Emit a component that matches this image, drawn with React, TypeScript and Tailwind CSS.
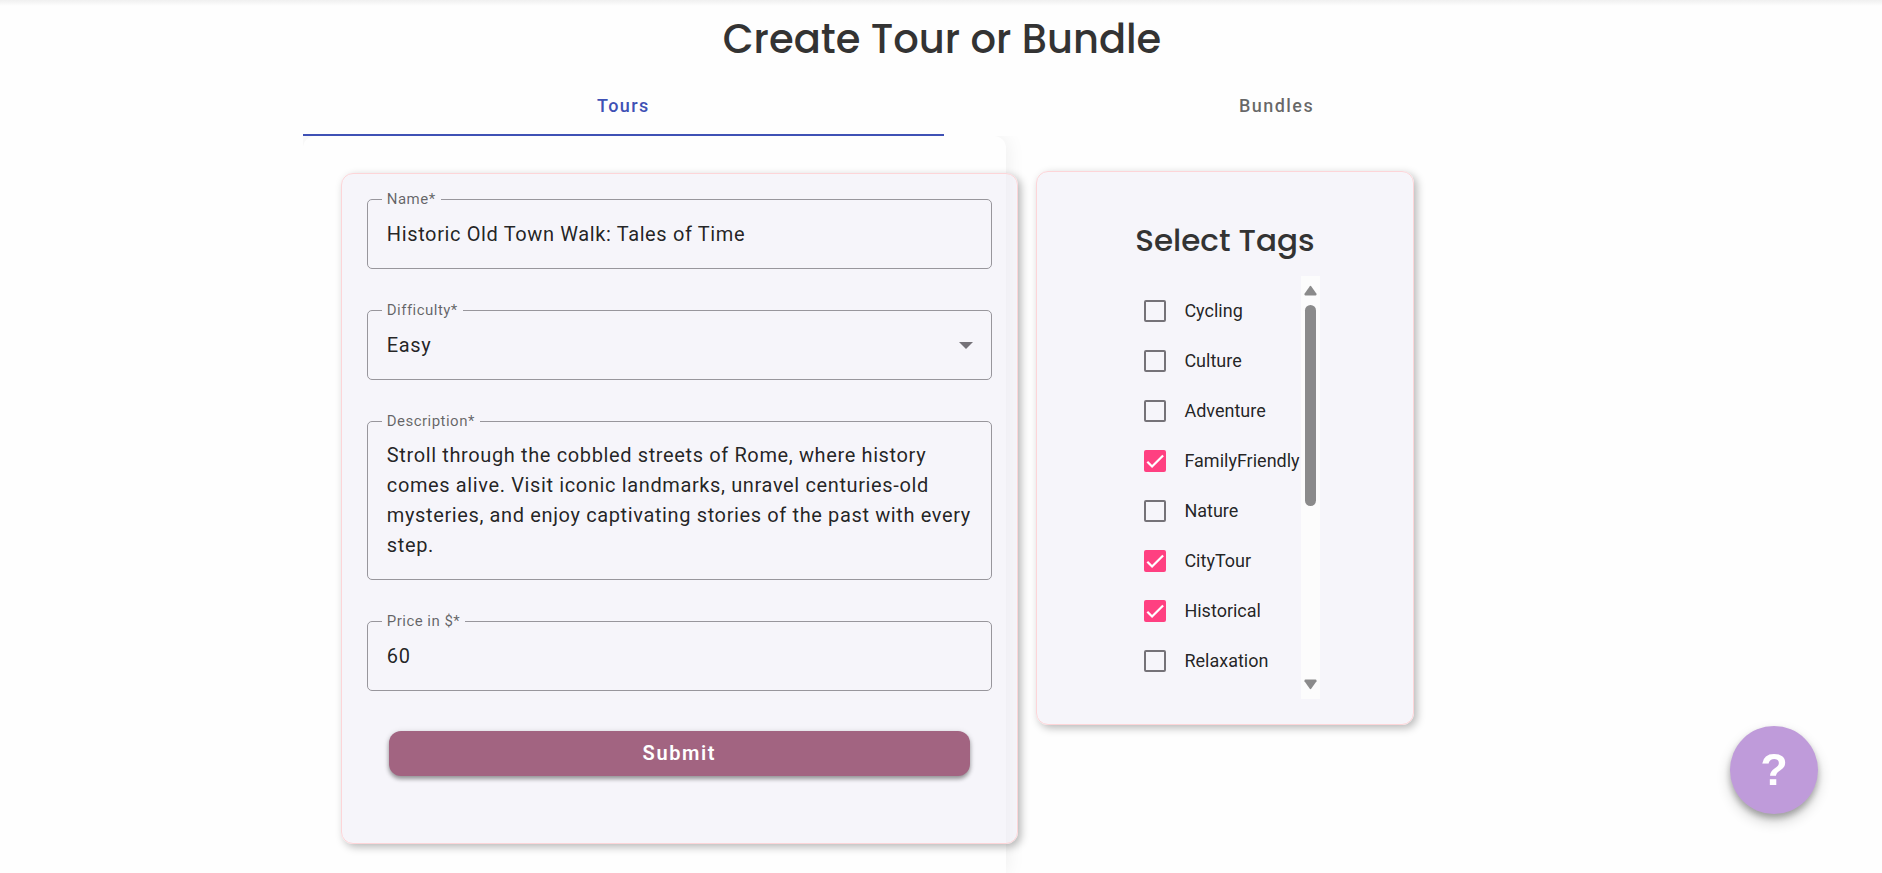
import { useState } from "react";
import type { ReactNode } from "react";

const TAGS = [
  { name: "Cycling", checked: false },
  { name: "Culture", checked: false },
  { name: "Adventure", checked: false },
  { name: "FamilyFriendly", checked: true },
  { name: "Nature", checked: false },
  { name: "CityTour", checked: true },
  { name: "Historical", checked: true },
  { name: "Relaxation", checked: false },
];

const CARD =
  "rounded-xl border border-[#fdd5d8] bg-[#eeebf5]/50 shadow-[3px_3px_8px_rgba(0,0,0,0.28)]";
const CONTROL =
  "block w-full bg-transparent px-[19px] text-xl tracking-[0.03125em] text-black/87 outline-none";

function Field({ id, label, children }: { id: string; label: string; children: ReactNode }) {
  return (
    <fieldset className="min-w-0 rounded-[5px] border border-[#98969c]">
      <legend className="ml-3.5 px-[5px] text-[15px] leading-5 tracking-[0.03125em] text-black/60">
        <label htmlFor={id}>{label}</label>
      </legend>
      {children}
    </fieldset>
  );
}

function TagRow({ name, initial }: { name: string; initial: boolean }) {
  const [checked, setChecked] = useState(initial);
  return (
    <li className="flex h-[50px] items-center">
      <label className="flex items-center gap-[18px] whitespace-nowrap text-lg text-black/87">
        <span className="grid size-[22px]">
          <input
            type="checkbox"
            checked={checked}
            onChange={(e) => setChecked(e.target.checked)}
            className="col-start-1 row-start-1 size-[22px] appearance-none rounded-[2px] border-2 border-[#757278] checked:border-[#ff4081] checked:bg-[#ff4081]"
          />
          {checked && (
            <svg
              viewBox="0 0 24 24"
              aria-hidden="true"
              className="pointer-events-none col-start-1 row-start-1 m-0.5 size-[18px]"
              fill="none"
              stroke="#fff"
              strokeWidth="3"
            >
              <path d="M1.73 12.91 8.1 19.28 22.79 4.59" />
            </svg>
          )}
        </span>
        {name}
      </label>
    </li>
  );
}

function ScrollTrack() {
  return (
    <div aria-hidden="true" className="flex w-[19px] shrink-0 flex-col items-center bg-[#fcfcfc] py-[9px]">
      <svg viewBox="0 0 13 11" className="h-[11px] w-[13px]" fill="#8b8b8b">
        <path d="M5.6 1.4Q6.5.2 7.4 1.4L12.5 8.8Q13 10.4 11.6 10.4H1.4Q0 10.4.5 8.8Z" />
      </svg>
      <div className="mt-[9px] h-[201px] w-[11px] rounded-full bg-[#8b8b8b]" />
      <svg viewBox="0 0 13 11" className="mt-auto h-[11px] w-[13px]" fill="#8b8b8b">
        <path d="M5.6 9.6Q6.5 10.8 7.4 9.6L12.5 2.2Q13 .6 11.6.6H1.4Q0 .6.5 2.2Z" />
      </svg>
    </div>
  );
}

export default function App() {
  return (
    <div className="min-h-screen overflow-hidden bg-[#fefefe] pl-0.5 font-[Roboto,sans-serif]">
      <div className="-ml-0.5 h-1.5 bg-linear-to-b from-[#f0f0f0] to-[#fefefe]" />
      <h1 className="h-[70px] text-center font-[Poppins,sans-serif] text-[40px] leading-[66px] font-medium text-[#333]">
        Create Tour or Bundle
      </h1>
      <div className="mx-auto w-[68%]">
        <div role="tablist" className="-mr-4 grid grid-cols-2 gap-3">
          <button
            role="tab"
            aria-selected="true"
            className="h-[60px] border-b-2 border-[#3f51b5] pt-0.5 text-lg font-medium tracking-[0.08em] text-[#3f51b5]"
          >
            Tours
          </button>
          <button
            role="tab"
            aria-selected="false"
            className="h-[60px] border-b-2 border-transparent pt-0.5 text-lg font-medium tracking-[0.08em] text-black/60"
          >
            Bundles
          </button>
        </div>

        <div className="flex items-start overflow-clip">
          <div className="w-[55%] shrink-0 rounded-t-xl pt-[37px] pb-[29px] pl-[38px] shadow-[0_0_20px_rgba(0,0,0,0.08)]">
            <form
              className={`${CARD} -mr-3 flex flex-col gap-[31px] px-[25px] pt-[15px] pb-[67px]`}
              onSubmit={(e) => e.preventDefault()}
            >
              <Field id="name" label="Name*">
                <input
                  id="name"
                  type="text"
                  defaultValue="Historic Old Town Walk: Tales of Time"
                  className={`${CONTROL} mb-[9px] h-[50px]`}
                />
              </Field>
              <Field id="difficulty" label="Difficulty*">
                <div className="relative mb-[9px]">
                  <select id="difficulty" defaultValue="Easy" className={`${CONTROL} h-[50px] appearance-none`}>
                    <option>Easy</option>
                  </select>
                  <svg
                    viewBox="0 0 14 7"
                    aria-hidden="true"
                    className="pointer-events-none absolute top-[22px] right-[18px] h-[7px] w-3.5"
                    fill="#757278"
                  >
                    <path d="M0 0h14L7 7Z" />
                  </svg>
                </div>
              </Field>
              <Field id="description" label="Description*">
                <textarea
                  id="description"
                  rows={4}
                  className={`${CONTROL} mt-[9px] mb-[19px] h-[120px] resize-none overflow-hidden leading-[30px]`}
                  defaultValue="Stroll through the cobbled streets of Rome, where history comes alive. Visit iconic landmarks, unravel centuries-old mysteries, and enjoy captivating stories of the past with every step."
                />
              </Field>
              <Field id="price" label="Price in $*">
                <input
                  id="price"
                  type="text"
                  inputMode="numeric"
                  defaultValue="60"
                  className={`${CONTROL} mb-[9px] h-[50px]`}
                />
              </Field>
              <button
                type="submit"
                className="mx-[22px] mt-[9px] h-[45px] rounded-xl bg-[#a26481] pb-0.5 text-xl font-semibold tracking-[0.08em] text-white shadow-[0_3px_4px_rgba(0,0,0,0.35),0_1px_6px_rgba(0,0,0,0.12)]"
              >
                Submit
              </button>
            </form>
          </div>

          <section
            className={`${CARD} mt-[35px] ml-[30px] flex w-[378px] shrink-0 flex-col items-center pt-[45px] pb-[25px]`}
          >
            <h2 className="font-[Poppins,sans-serif] text-[31px] leading-[46px] font-medium text-[#333]">
              Select Tags
            </h2>
            <div className="mt-[13px] flex h-[423px] pl-[7px]">
              <ul className="w-[165px] overflow-x-clip overflow-y-auto pt-2.5 pl-2">
                {TAGS.map((tag) => (
                  <TagRow key={tag.name} name={tag.name} initial={tag.checked} />
                ))}
              </ul>
              <ScrollTrack />
            </div>
          </section>
        </div>
      </div>

      <button
        aria-label="Help"
        className="fixed right-16 bottom-[59px] size-[88px] rounded-full bg-[#bf9bda] font-['Liberation_Sans',Arial,sans-serif] text-[45px] font-bold text-white shadow-[0_4px_6px_rgba(0,0,0,0.25),0_7px_14px_rgba(0,0,0,0.2)]"
      >
        ?
      </button>
    </div>
  );
}
